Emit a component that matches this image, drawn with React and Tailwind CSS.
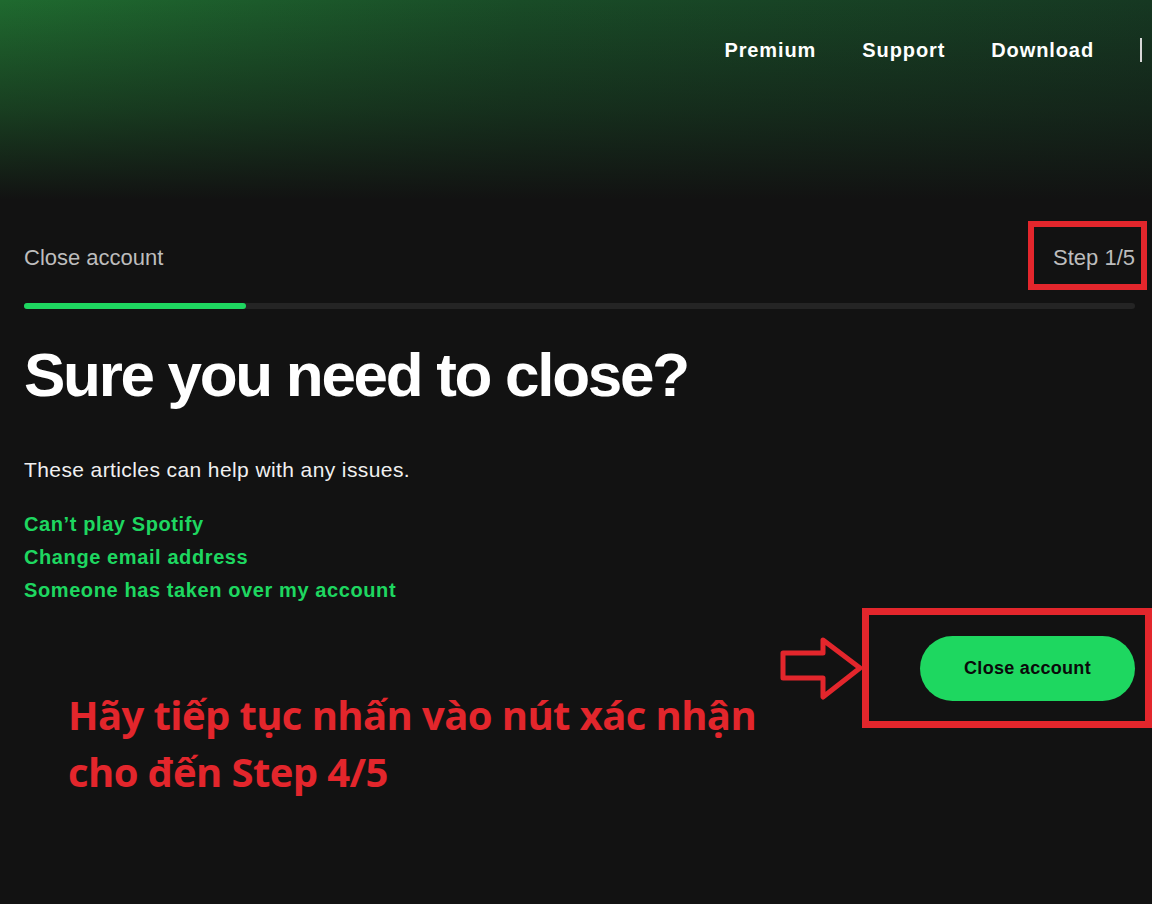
import React from 'react';

const links = ["Can\u2019t play Spotify", 'Change email address', 'Someone has taken over my account'];

function NavLink({ children }) {
  return (
    <a href="#" className="text-[20px] font-bold leading-[24px] tracking-[0.9px] text-white">
      {children}
    </a>
  );
}

export default function App() {
  return (
    <div className="relative min-h-[904px] w-full overflow-hidden bg-[#121212] font-['Liberation_Sans',Arial,sans-serif]">
      {/* top gradient + nav */}
      <header className="h-[200px] bg-[linear-gradient(to_bottom,rgba(18,18,18,0)_0%,rgba(18,18,18,0.5)_55%,#121212_100%),linear-gradient(to_right,#1f6a2f_0%,#194c27_45%,#163822_100%)]">
        <nav className="flex items-center justify-end gap-[46px] pt-[38px] pr-[10px]">
          <NavLink>Premium</NavLink>
          <NavLink>Support</NavLink>
          <NavLink>Download</NavLink>
          <span className="h-[24px] w-[2px] bg-[#d9d9d9]" />
        </nav>
      </header>

      <main className="pl-[24px] pr-[17px]">
        <div className="mt-[46px] flex items-center justify-between text-[22px] leading-[24px] text-[#bdbdbd]">
          <span>Close account</span>
          <span>Step 1/5</span>
        </div>

        <div className="mt-[33px] h-[6px] w-full rounded-full bg-[#242424]">
          <div className="h-full w-[222px] rounded-full bg-[#1ed760]" />
        </div>

        <h1 className="mt-[35px] text-[62px] font-bold leading-none tracking-[-2.3px] text-white">
          Sure you need to close?
        </h1>

        <p className="mt-[52px] text-[21px] leading-[24px] tracking-[0.4px] text-[#f0f0f0]">
          These articles can help with any issues.
        </p>

        <ul className="mt-[26px]">
          {links.map((l) => (
            <li key={l} className="text-[20px] font-bold leading-[33px] tracking-[0.6px] text-[#1ed760]">
              <a href="#">{l}</a>
            </li>
          ))}
        </ul>

        <div className="mt-[29px] flex items-start justify-between">
          <p className="mt-[50px] pl-[44px] font-['Open_Sans',sans-serif] text-[40px] font-bold leading-[57px] tracking-[-0.6px] text-[#e3262c]">
            Hãy tiếp tục nhấn vào nút xác nhận
            <br />
            cho đến Step 4/5
          </p>
          <button className="h-[65px] w-[215px] shrink-0 rounded-full bg-[#1ed760] text-[18px] font-bold tracking-[0.3px] text-[#0a0a0a]">
            Close account
          </button>
        </div>
      </main>

      {/* annotations */}
      <div className="absolute left-[1028px] top-[221px] h-[69px] w-[119px] border-[6px] border-[#e3262c]" />
      <div className="absolute left-[862px] top-[608px] h-[120px] w-[290px] border-[7px] border-[#e3262c]" />
      <svg className="absolute left-[780px] top-[636px]" width="84" height="66" viewBox="0 0 84 66" fill="none">
        <path d="M3 17 H43 V4 L80 32 L43 61 V42 H3 Z" stroke="#e3262c" strokeWidth="5" strokeLinejoin="round" />
      </svg>
    </div>
  );
}
